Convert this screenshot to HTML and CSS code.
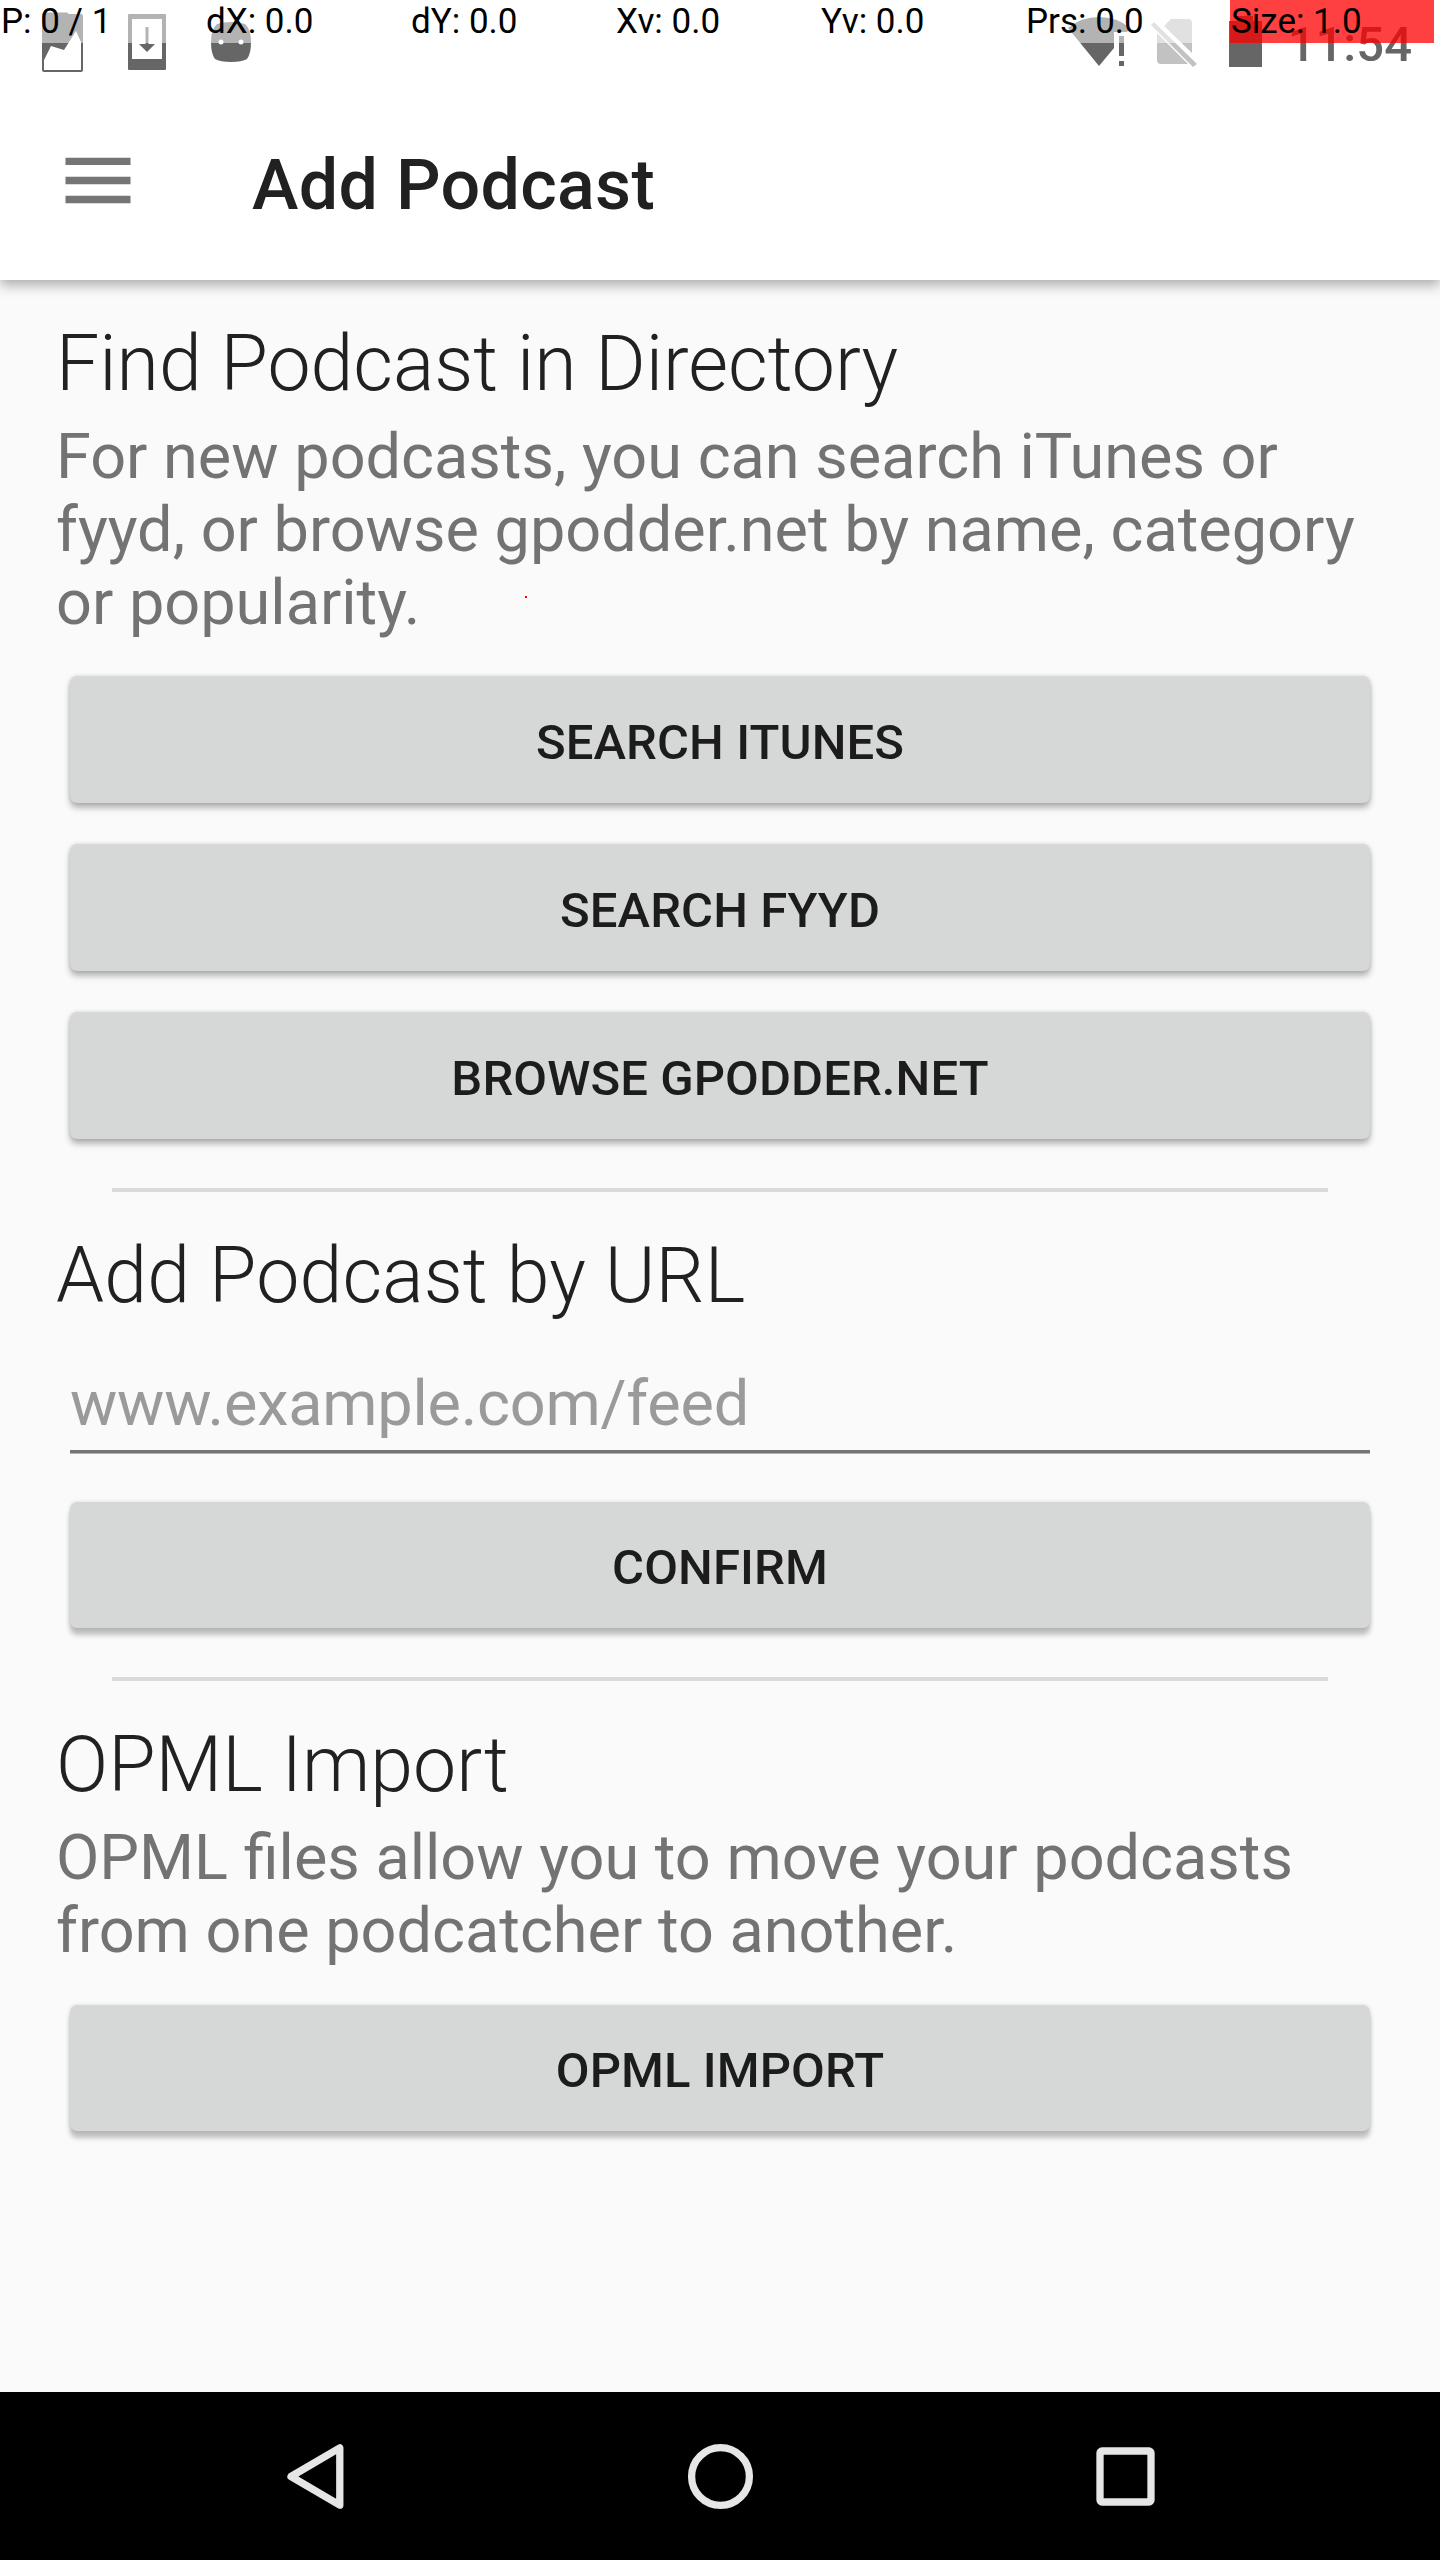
FILE: index.html
```html
<!DOCTYPE html>
<html lang="en">
<head>
<meta charset="utf-8">
<title>Add Podcast</title>
<link rel="stylesheet" href="styles.css">
</head>
<body>
<div class="screen">
  <header class="appbar">
    <div class="status">
      <svg class="status-icons" width="1440" height="84" viewBox="0 0 1440 84">
        <g fill="#666">
          <path fill-rule="evenodd" d="M44 12.500H67L69 14H81Q83 14 83 16V70Q83 72 81 72H44Q42 72 42 70V15Q42 12.500 44 12.500ZM44 60V70H81V42L76 31L64 50L51 46Z"/>
          <path fill-rule="evenodd" d="M129 14H165Q166 14 166 15V69Q166 70 165 70H129Q128 70 128 69V15Q128 14 129 14ZM132 19V59H162V19Z"/>
          <path d="M145.500 27H148.500V44H155L147 52L139 44H145.500Z"/>
          <path fill-rule="evenodd" d="M217 24Q231 20 245 24Q251 29 251 42Q251 54 247 59Q242 62 231 62Q220 62 215 59Q211 54 211 42Q211 29 217 24ZM221 39.500A2.500 2.500 0 1 0 221 44.500A2.500 2.500 0 1 0 221 39.500ZM241 39.500A2.500 2.500 0 1 0 241 44.500A2.500 2.500 0 1 0 241 39.500Z"/>
          <path d="M1068 28Q1081 17 1099 17Q1117 17 1130 28L1127 32H1114V48L1099 66Z"/>
          <path d="M1119 36H1124V56H1119ZM1119 61H1124V66H1119Z"/>
          <path d="M1229 21H1237V16H1253V21H1262V67H1229Z"/>
        </g>
        <g fill="#c2c2c2">
          <path d="M1164 26L1171 19H1188Q1192 19 1192 23V53ZM1157 33L1188 64H1161Q1157 64 1157 60Z"/>
          <path d="M1151 25L1154 22L1197 64L1193 67Z"/>
        </g>
      </svg>
      <span class="clock">11:54</span>
    </div>
    <div class="toolbar">
      <svg class="menu" width="66" height="48" viewBox="0 0 66 48"><path fill="#757575" d="M.5 -.3H65.500V7H.5ZM.5 18.700H65.500V26.200H.5ZM.5 37.700H65.500V45.200H.5Z"/></svg>
      <h1 class="title">Add Podcast</h1>
    </div>
  </header>
  <main class="content">
    <section class="group">
      <h2 class="heading">Find Podcast in Directory</h2>
      <p class="text">For new podcasts, you can search iTunes or fyyd, or browse gpodder.net by name, category or popularity.</p>
      <div class="actions actions-directory">
        <button class="button">SEARCH ITUNES</button>
        <button class="button">SEARCH FYYD</button>
        <button class="button">BROWSE GPODDER.NET</button>
      </div>
    </section>
    <hr class="divider">
    <section class="group">
      <h2 class="heading heading-url">Add Podcast by URL</h2>
      <input class="field" type="text" placeholder="www.example.com/feed">
      <div class="actions actions-url">
        <button class="button button-low">CONFIRM</button>
      </div>
    </section>
    <hr class="divider">
    <section class="group">
      <h2 class="heading">OPML Import</h2>
      <p class="text">OPML files allow you to move your podcasts from one podcatcher to another.</p>
      <div class="actions">
        <button class="button button-low">OPML IMPORT</button>
      </div>
    </section>
  </main>
  <nav class="navbar">
    <svg width="1440" height="168" viewBox="0 0 1440 168" fill="none" stroke="#e6e6e6" stroke-width="7.300" stroke-linejoin="round">
      <path d="M339.800 55.800V113.200L291 84.500Z"/>
      <circle cx="720.500" cy="84.500" r="28.900"/>
      <rect x="1100" y="59" width="51" height="51" rx="2"/>
    </svg>
  </nav>
  <div class="pointer">
    <span>P: 0 / 1</span><span>dX: 0.0</span><span>dY: 0.0</span><span>Xv: 0.0</span><span>Yv: 0.0</span><span>Prs: 0.0</span><span class="size">Size: 1.0</span>
  </div>
  <i class="touch"></i>
</div>
</body>
</html>
```
FILE: styles.css
```css
* { box-sizing: border-box; }
body { margin: 0; font-family: Roboto, sans-serif; background: #fafafa; }
.screen { position: relative; display: flex; flex-direction: column; width: 1440px; height: 2560px; overflow: hidden; }
.appbar { height: 280px; flex: none; background: #fff; box-shadow: 0 5px 12px rgba(0,0,0,.32); z-index: 1; }
.status { position: relative; height: 84px; }
.status-icons { display: block; }
.clock { position: absolute; right: 28px; top: 16px; font-size: 49px; line-height: 57px; font-weight: 500; color: #666; }
.toolbar { display: flex; align-items: center; height: 196px; padding-left: 65px; gap: 121px; }
.menu { display: block; overflow: visible; }
.title { margin: 6px 0 0; font-size: 70px; line-height: 82px; font-weight: 500; letter-spacing: .3px; color: #212121; }
.content { flex: 1; padding: 39px 56px 0; }
.heading { margin: 0; font-size: 77px; line-height: 90px; font-weight: 300; color: #212121; }
.heading-url { letter-spacing: .15px; }
.text { margin: 11px 0 0; font-size: 63px; line-height: 73px; color: #737373; }
.actions { display: flex; flex-direction: column; padding: 38px 14px 0; }
.actions-directory { gap: 41px; padding-top: 37px; }
.actions-url { padding-top: 49px; }
.button { height: 126px; padding: 5px 0 0; border: 0; border-radius: 7px; background: #d6d8d7; box-shadow: 0 5px 6px rgba(0,0,0,.28), 0 0 4px rgba(0,0,0,.14); font: 500 49px/57px Roboto, sans-serif; letter-spacing: .1px; color: #1c1c1c; }
.actions-directory .button { height: 127px; padding-top: 6px; }
.button-low { box-shadow: 0 7px 5px rgba(0,0,0,.24), 0 0 4px rgba(0,0,0,.12); }
.divider { height: 4px; margin: 49px 56px 39px; border: 0; background: #dadada; }
.field { display: block; width: 1300px; height: 104px; margin: 28px 14px 0; padding: 17px 0 10px; border: 0; border-bottom: 3px solid #757575; border-radius: 0; box-shadow: 0 1px #b0b0b0; background: none; font: 400 63px/74px Roboto, sans-serif; letter-spacing: -.22px; }
.field::placeholder { color: #9a9a9a; opacity: 1; }
.navbar { height: 168px; flex: none; background: #000; }
.navbar svg { display: block; }
.pointer { position: absolute; z-index: 2; left: 0; top: 0; display: grid; grid-template-columns: repeat(7, 204px); column-gap: 1px; height: 43px; font-size: 35px; line-height: 43px; color: #000; }
.pointer span { height: 43px; padding-left: 1px; background: rgba(255,255,255,.5); white-space: pre; }
.pointer .size { background: rgba(255,0,0,.75); }
.touch { position: absolute; left: 525px; top: 596px; width: 2px; height: 2px; background: #f00; }
```
